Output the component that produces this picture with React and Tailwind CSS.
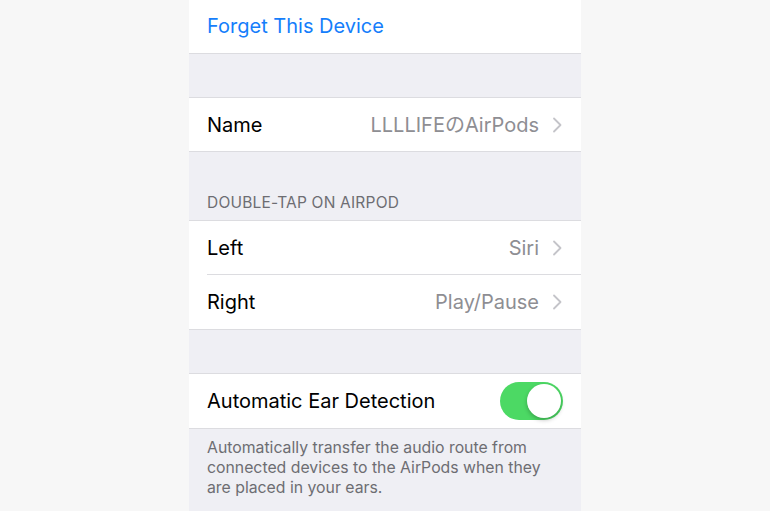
const font = { fontFamily: "Inter, 'Noto Sans CJK JP', sans-serif" };

function Chevron() {
  return (
    <svg width="10" height="16" viewBox="0 0 10 16" className="ml-[13px] shrink-0">
      <path d="M2 1.5 L8.5 8 L2 14.5" fill="none" stroke="#c4c4c9" strokeWidth="1.8" strokeLinecap="round" strokeLinejoin="round" />
    </svg>
  );
}

function Row({ label, value, last }) {
  return (
    <div className="flex h-[54px] items-center bg-white pl-[18px]">
      <div className={`flex h-full flex-1 items-center pr-[19px] ${last ? "" : "border-b border-[#dcdce0]"}`}>
        <span className="flex-1 text-[20px] text-black">{label}</span>
        <span className="text-[20px] text-[#8e8e93]">{value}</span>
        <Chevron />
      </div>
    </div>
  );
}

export default function App() {
  return (
    <div className="flex h-[511px] w-full justify-center overflow-hidden bg-[#f7f7f7]" style={font}>
      <div className="w-[392px] bg-[#efeff4]">
        <div className="flex h-[54px] items-center border-b border-[#dcdce0] bg-white pb-[1px] pl-[18px]">
          <span className="text-[20px] text-[#157efb]">Forget This Device</span>
        </div>

        <div className="h-[43px]" />
        <div className="border-y border-[#dcdce0]">
          <div className="flex h-[53px] items-center bg-white pl-[18px] pr-[19px]">
            <span className="flex-1 text-[20px] text-black">Name</span>
            <span className="text-[20px] text-[#8e8e93]">LLLLIFEのAirPods</span>
            <Chevron />
          </div>
        </div>

        <div className="flex h-[68px] items-end pb-[6px] pl-[18px]">
          <span className="text-[15.5px] uppercase tracking-[0.2px] text-[#6d6d72]">Double-tap on AirPod</span>
        </div>
        <div className="border-y border-[#dcdce0]">
          <Row label="Left" value="Siri" />
          <Row label="Right" value="Play/Pause" last />
        </div>

        <div className="h-[43px]" />
        <div className="border-y border-[#dcdce0]">
          <div className="flex h-[54px] items-center bg-white pl-[18px] pr-[18px]">
            <span className="flex-1 text-[20px] text-black">Automatic Ear Detection</span>
            <div className="flex h-[38px] w-[63px] items-center justify-end rounded-full bg-[#4cd964] p-[2px]">
              <div className="h-[34px] w-[34px] rounded-full bg-white shadow-[0_2px_4px_rgba(0,0,0,0.25)]" />
            </div>
          </div>
        </div>

        <p className="pl-[18px] pr-[16px] pt-[9px] text-[15.8px] leading-[20px] text-[#6d6d72]">
          Automatically transfer the audio route from connected devices to the AirPods when they are placed in your ears.
        </p>
      </div>
    </div>
  );
}
